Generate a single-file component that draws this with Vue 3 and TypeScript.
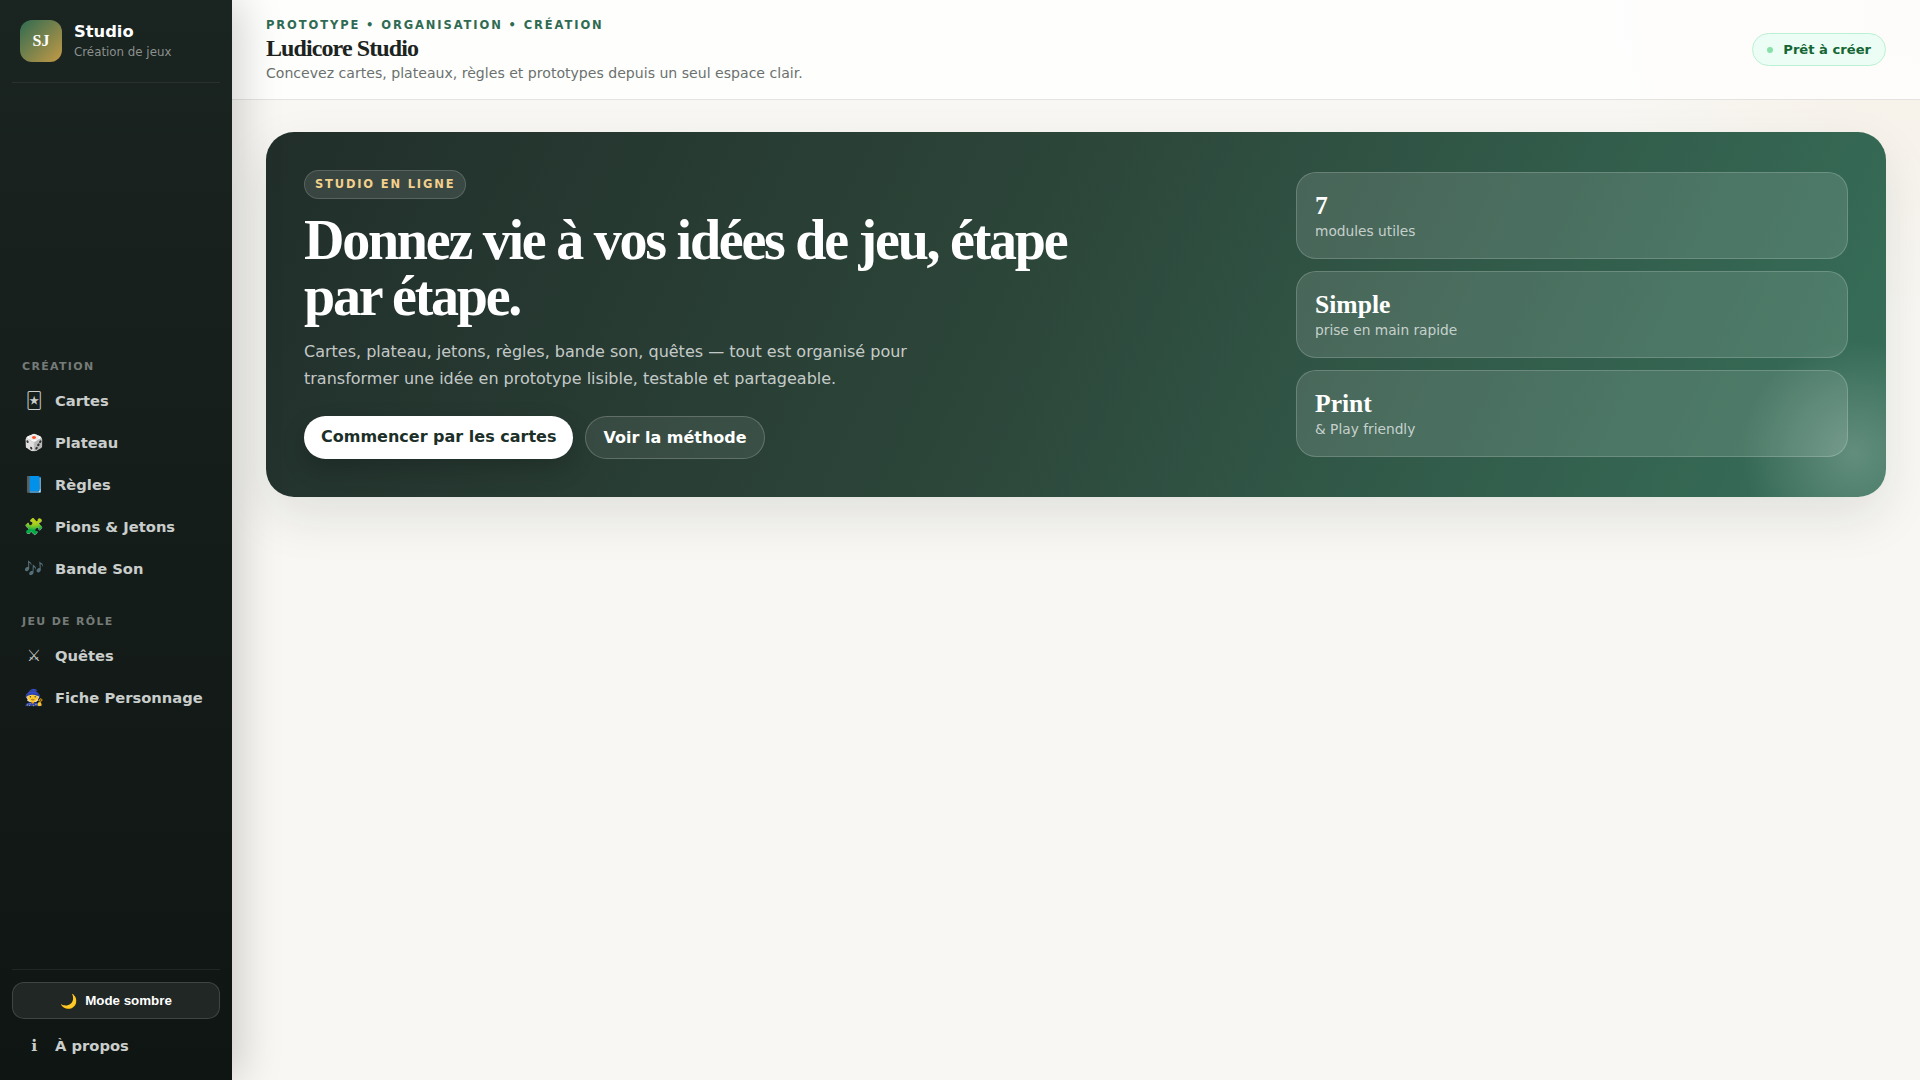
<script setup lang="ts">
const creation = [
  { icon: '🃏', label: 'Cartes' },
  { icon: '🎲', label: 'Plateau' },
  { icon: '📘', label: 'Règles' },
  { icon: '🧩', label: 'Pions & Jetons' },
  { icon: '🎶', label: 'Bande Son' },
]

const rpg = [
  { icon: '⚔', label: 'Quêtes' },
  { icon: '🧙', label: 'Fiche Personnage' },
]

const stats = [
  { value: '7', label: 'modules utiles' },
  { value: 'Simple', label: 'prise en main rapide' },
  { value: 'Print', label: '& Play friendly' },
]
</script>

<template>
  <div class="shell">
    <aside class="sidebar">
      <div class="brand">
        <div class="logo">SJ</div>
        <div>
          <div class="brand-name">Studio</div>
          <div class="brand-sub">Création de jeux</div>
        </div>
      </div>

      <nav class="nav">
        <div class="nav-title">Création</div>
        <a v-for="item in creation" :key="item.label" class="nav-item">
          <span class="nav-icon">{{ item.icon }}</span>
          <span>{{ item.label }}</span>
        </a>
        <div class="nav-title second">Jeu de rôle</div>
        <a v-for="item in rpg" :key="item.label" class="nav-item">
          <span class="nav-icon">{{ item.icon }}</span>
          <span>{{ item.label }}</span>
        </a>
      </nav>

      <div class="side-footer">
        <button class="theme-btn"><span class="moon">🌙</span>Mode sombre</button>
        <a class="nav-item">
          <span class="nav-icon">ℹ</span>
          <span>À propos</span>
        </a>
      </div>
    </aside>

    <div class="content">
      <header class="topbar">
        <div>
          <div class="eyebrow">Prototype • Organisation • Création</div>
          <h1 class="page-title">Ludicore Studio</h1>
          <p class="page-sub">Concevez cartes, plateaux, règles et prototypes depuis un seul espace clair.</p>
        </div>
        <div class="status"><span class="dot"></span>Prêt à créer</div>
      </header>

      <main class="main">
        <section class="hero">
          <div class="hero-left">
            <span class="kicker">Studio en ligne</span>
            <h2 class="hero-title">Donnez vie à vos idées de jeu, étape par étape.</h2>
            <p class="hero-text">
              Cartes, plateau, jetons, règles, bande son, quêtes — tout est organisé pour
              transformer une idée en prototype lisible, testable et partageable.
            </p>
            <div class="hero-actions">
              <button class="btn btn-primary">Commencer par les cartes</button>
              <button class="btn btn-ghost">Voir la méthode</button>
            </div>
          </div>
          <div class="hero-stats">
            <div v-for="stat in stats" :key="stat.value" class="stat">
              <strong>{{ stat.value }}</strong>
              <span>{{ stat.label }}</span>
            </div>
          </div>
        </section>
      </main>
    </div>
  </div>
</template>

<style scoped>
.shell {
  display: flex;
  height: 1080px;
  overflow: hidden;
  font-family: "DejaVu Sans", sans-serif;
  background:
    radial-gradient(circle at 100% 0%, #f6f0e6 0, rgba(246, 240, 230, 0) 320px),
    #f8f7f3;
}

.sidebar {
  position: relative;
  z-index: 2;
  flex: 0 0 232px;
  display: flex;
  flex-direction: column;
  box-sizing: border-box;
  padding: 20px 12px 14px;
  background: linear-gradient(180deg, #1a2421 0%, #0f1512 100%);
  box-shadow: 8px 0 40px rgba(0, 0, 0, 0.18);
}

.brand {
  display: flex;
  align-items: center;
  gap: 12px;
  padding: 0 8px 20px;
  border-bottom: 1px solid rgba(255, 255, 255, 0.07);
}

.logo {
  width: 42px;
  height: 42px;
  display: grid;
  place-items: center;
  border-radius: 12px;
  background: linear-gradient(135deg, #2f6b52, #c49a45);
  color: #fff;
  font-family: "Liberation Serif", serif;
  font-weight: 700;
  font-size: 16px;
}

.brand-name {
  color: #fff;
  font-size: 16.32px;
  font-weight: 700;
  line-height: 20px;
}

.brand-sub {
  margin-top: 3px;
  color: #8b918e;
  font-size: 11.84px;
  line-height: 15px;
}

.nav {
  flex: 1;
  display: flex;
  flex-direction: column;
  justify-content: center;
  padding-top: 24px;
}

.nav-title {
  padding: 0 10px;
  margin-bottom: 3px;
  color: #757b78;
  font-size: 11px;
  font-weight: 700;
  letter-spacing: 0.12em;
  line-height: 18px;
  text-transform: uppercase;
}

.nav-title.second {
  margin-top: 24px;
}

.nav-item {
  display: flex;
  align-items: center;
  gap: 10px;
  height: 42px;
  padding: 0 11px;
  color: #c9cdcb;
  font-size: 14.72px;
  font-weight: 700;
}

.nav-icon {
  width: 22px;
  text-align: center;
  font-size: 16px;
  font-weight: 400;
}

.side-footer {
  padding-top: 12px;
  border-top: 1px solid rgba(255, 255, 255, 0.07);
}

.theme-btn {
  display: flex;
  align-items: center;
  justify-content: center;
  gap: 8px;
  width: 100%;
  height: 37px;
  margin-bottom: 5px;
  border: 1px solid rgba(255, 255, 255, 0.14);
  border-radius: 12px;
  background: #212725;
  color: #fff;
  font-family: "Liberation Sans", sans-serif;
  font-size: 13.33px;
  font-weight: 700;
}

.moon {
  font-size: 14px;
}

.content {
  flex: 1;
  min-width: 0;
  display: flex;
  flex-direction: column;
}

.topbar {
  display: flex;
  align-items: center;
  justify-content: space-between;
  box-sizing: border-box;
  height: 100px;
  padding: 0 34px;
  background: rgba(255, 255, 255, 0.8);
  border-bottom: 1px solid #e4e3df;
}

.eyebrow {
  color: #2f6b52;
  font-size: 11.5px;
  font-weight: 700;
  letter-spacing: 0.165em;
  line-height: 16px;
  text-transform: uppercase;
  transform: translateY(1px);
}

.page-title {
  margin: 3px 0 0;
  color: #1c2421;
  font-family: "Liberation Serif", serif;
  font-size: 24px;
  font-weight: 700;
  letter-spacing: -0.9px;
  line-height: 26px;
}

.page-sub {
  margin: 1.5px 0 0;
  color: #6b716e;
  font-size: 14.08px;
  line-height: 20px;
}

.status {
  display: flex;
  align-items: center;
  gap: 10px;
  height: 33px;
  box-sizing: border-box;
  padding: 0 14px;
  border: 1px solid #bbf0d3;
  border-radius: 999px;
  background: #ecfdf5;
  color: #166534;
  font-size: 13.12px;
  font-weight: 700;
}

.dot {
  width: 6px;
  height: 6px;
  border-radius: 50%;
  background: #86e0a8;
}

.main {
  flex: 1;
  padding: 32px 34px;
}

.hero {
  display: grid;
  grid-template-columns: minmax(0, 1fr) 552px;
  gap: 28px;
  align-items: center;
  box-sizing: border-box;
  height: 365px;
  padding: 0 38px;
  border-radius: 28px;
  background:
    radial-gradient(circle at 98% 88%, rgba(255, 255, 255, 0.22) 0, rgba(255, 255, 255, 0) 112px),
    linear-gradient(115deg, #212e2a 0%, #2c4539 45%, #37705a 100%);
  box-shadow: 0 20px 50px rgba(20, 30, 25, 0.1);
}

.hero-left {
  display: flex;
  flex-direction: column;
  align-items: flex-start;
}

.kicker {
  box-sizing: border-box;
  height: 29px;
  line-height: 27px;
  padding: 0 10px;
  border: 1px solid rgba(255, 255, 255, 0.16);
  border-radius: 999px;
  background: rgba(255, 255, 255, 0.1);
  color: #f3d08c;
  font-size: 11.5px;
  font-weight: 700;
  letter-spacing: 0.158em;
  text-transform: uppercase;
}

.hero-title {
  max-width: 800px;
  margin: 13px 0 0;
  color: #fff;
  font-family: "Liberation Serif", serif;
  font-size: 56px;
  font-weight: 700;
  letter-spacing: -0.04em;
  line-height: 56px;
}

.hero-text {
  max-width: 640px;
  margin: 14px 0 0;
  color: rgba(255, 255, 255, 0.74);
  font-size: 16px;
  line-height: 27px;
}

.hero-actions {
  display: flex;
  gap: 12px;
  margin-top: 24px;
}

.btn {
  height: 43px;
  border-radius: 999px;
  font-family: "DejaVu Sans", sans-serif;
  font-size: 16px;
  font-weight: 700;
}

.btn-primary {
  padding: 0 17px 2px;
  border: 0;
  background: #fff;
  color: #1c2f28;
  box-shadow: 0 10px 24px rgba(0, 0, 0, 0.18);
}

.btn-ghost {
  padding: 0 17px;
  border: 1px solid rgba(255, 255, 255, 0.2);
  background: rgba(255, 255, 255, 0.08);
  color: #fff;
}

.hero-stats {
  display: flex;
  flex-direction: column;
  gap: 12px;
}

.stat {
  display: flex;
  flex-direction: column;
  justify-content: center;
  box-sizing: border-box;
  height: 87px;
  padding: 0 18px;
  border: 1px solid rgba(255, 255, 255, 0.18);
  border-radius: 20px;
  background: rgba(255, 255, 255, 0.12);
}

.stat strong {
  color: #fff;
  font-family: "Liberation Serif", serif;
  font-size: 25.6px;
  line-height: 30px;
}

.stat span {
  color: rgba(255, 255, 255, 0.7);
  font-size: 13.76px;
  line-height: 20px;
}
</style>
